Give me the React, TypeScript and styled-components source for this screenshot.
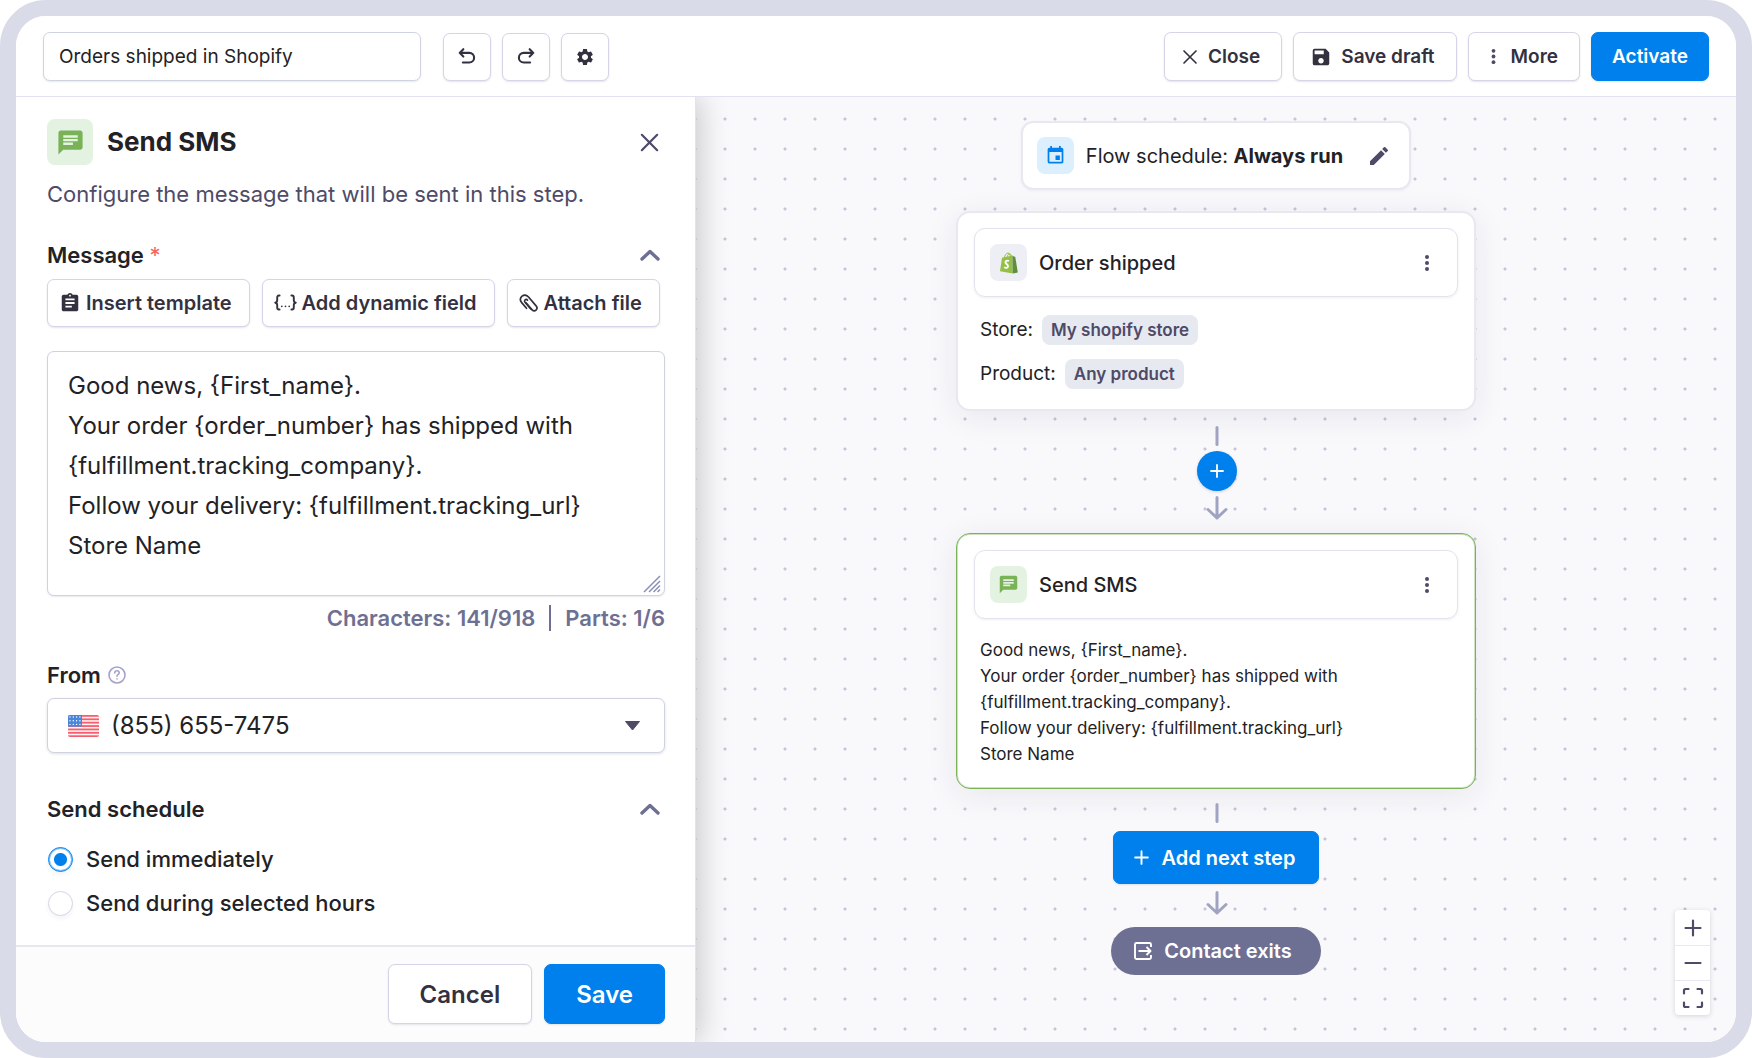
import React, { useState } from "react";
import styled, { createGlobalStyle, css } from "styled-components";
import { MdAssignment, MdChat, MdEdit, MdEvent, MdSave, MdSettings } from "react-icons/md";

const color = {
  frame: "#d9dbe8",
  line: "#e3e2f0",
  control: "#d5d4e8",
  field: "#ced3df",
  text: "#222226",
  dark: "#33313f",
  muted: "#6e7093",
  icon: "#4e4a67",
  blue: "#0080ec",
  green: "#79b257",
  connector: "#a0a4c2",
};

const GlobalStyle = createGlobalStyle`
  *, *::before, *::after { box-sizing: border-box; }
  body { margin: 0; background: #ffffff; }
  body, button, input, textarea, select {
    font-family: Inter, "Liberation Sans", sans-serif;
    color: ${color.text};
  }
  h1, h2, h3, p { margin: 0; }
`;

const Frame = styled.div`
  display: flex;
  flex-direction: column;
  min-height: 100vh;
  border: 16px solid ${color.frame};
  border-radius: 46px;
  overflow: hidden;
  background: #ffffff;
`;

const Toolbar = styled.header`
  position: relative;
  z-index: 2;
  display: flex;
  align-items: center;
  justify-content: space-between;
  padding: 16px 27px 15px;
  border-bottom: 1px solid ${color.line};
  background: #ffffff;
`;

const ToolbarGroup = styled.div`
  display: flex;
  align-items: center;
  gap: 11px;
`;

const FlowName = styled.input`
  width: 378px;
  height: 49px;
  margin-right: 11px;
  padding: 0 15px;
  border: 1px solid ${color.field};
  border-radius: 7px;
  box-shadow: 0 1px 2px rgba(40, 40, 80, 0.1);
  font-size: 19px;
  outline: none;
`;

type ButtonSize = "icon" | "bar" | "chip" | "large" | "step";

const buttonSizes = {
  icon: css`
    width: 48px;
    height: 48px;
  `,
  bar: css<{ $primary?: boolean }>`
    height: 49px;
    padding: ${(p) => (p.$primary ? "0 20px" : "0 21px 0 16px")};
    gap: 9px;
    font-size: 19px;
  `,
  chip: css`
    height: 48px;
    padding: 0 17px 0 11px;
    gap: 5px;
    font-size: 20px;
  `,
  large: css`
    height: 60px;
    padding: 0 31px;
    font-size: 24px;
  `,
  step: css`
    height: 53px;
    padding: 0 23px 0 19px;
    gap: 12px;
    font-size: 20px;
  `,
};

const Button = styled.button<{ $size: ButtonSize; $primary?: boolean }>`
  display: inline-flex;
  align-items: center;
  justify-content: center;
  border: 1px solid ${(p) => (p.$primary ? color.blue : color.control)};
  border-radius: 7px;
  background: ${(p) => (p.$primary ? color.blue : "#ffffff")};
  color: ${(p) => (p.$primary ? "#ffffff" : color.dark)};
  box-shadow: 0 1px 2px rgba(40, 40, 80, 0.12);
  font-weight: 600;
  white-space: nowrap;
  cursor: pointer;
  ${(p) => buttonSizes[p.$size]}
`;

const PlainButton = styled.button`
  display: inline-flex;
  align-items: center;
  justify-content: center;
  padding: 0;
  border: 0;
  background: none;
  color: ${color.icon};
  cursor: pointer;
`;

const Body = styled.div`
  display: grid;
  grid-template-columns: minmax(560px, 680px) 1fr;
  flex: 1;
`;

const Sidebar = styled.aside`
  display: flex;
  flex-direction: column;
  z-index: 1;
  border-right: 1px solid ${color.line};
  background: #ffffff;
  box-shadow: 4px 0 28px rgba(0, 0, 0, 0.2);
`;

const SidebarContent = styled.div`
  display: flex;
  flex: 1;
  flex-direction: column;
  padding: 22px 30px 27px 31px;
`;

const TitleRow = styled.div`
  display: flex;
  align-items: center;
  gap: 14px;
  padding-right: 4px;
`;

const PanelTitle = styled.h1`
  flex: 1;
  font-size: 26px;
  line-height: 32px;
  font-weight: 700;
`;

const IconTile = styled.span<{ $size: number; $background: string; $color: string }>`
  display: inline-flex;
  align-items: center;
  justify-content: center;
  flex: none;
  width: ${(p) => p.$size}px;
  height: ${(p) => p.$size}px;
  border-radius: 8px;
  background: ${(p) => p.$background};
  color: ${(p) => p.$color};
`;

const Description = styled.p`
  margin-top: 13px;
  color: ${color.icon};
  font-size: 22px;
  line-height: 32px;
`;

const SectionHead = styled.div<{ $top: number }>`
  display: flex;
  align-items: center;
  justify-content: space-between;
  margin-top: ${(p) => p.$top}px;
  padding-right: 5px;
`;

const labelText = css`
  font-size: 22px;
  line-height: 28px;
  font-weight: 600;
`;

const Label = styled.label`
  ${labelText}
`;

const SectionTitle = styled.h2`
  ${labelText}
`;

const Required = styled.span`
  color: #f2665f;
  font-weight: 400;
`;

const ChipRow = styled.div`
  display: flex;
  gap: 12px;
  margin-top: 10px;
`;

const MessageField = styled.div`
  position: relative;
  margin-top: 24px;
`;

const MessageInput = styled.textarea`
  display: block;
  width: 100%;
  height: 245px;
  padding: 14px 20px;
  border: 1px solid ${color.field};
  border-radius: 7px;
  box-shadow: 0 1px 2px rgba(40, 40, 80, 0.1);
  font-size: 24px;
  line-height: 40px;
  outline: none;
  resize: none;
`;

const ResizeGrip = styled.svg`
  position: absolute;
  right: 4px;
  bottom: 3px;
  pointer-events: none;
`;

const Counter = styled.div`
  display: flex;
  align-items: center;
  justify-content: flex-end;
  gap: 14px;
  margin-top: 8px;
  color: ${color.muted};
  font-size: 22px;
  line-height: 28px;
  font-weight: 600;
`;

const Divider = styled.span`
  width: 2px;
  height: 26px;
  background: ${color.muted};
`;

const FromHead = styled.div`
  display: flex;
  align-items: center;
  gap: 7px;
  margin-top: 29px;
`;

const SelectBox = styled.div`
  display: grid;
  position: relative;
  align-items: center;
  margin-top: 9px;

  & > svg {
    position: absolute;
    pointer-events: none;
  }
  & > svg:first-child {
    left: 21px;
  }
  & > svg:last-child {
    right: 24px;
  }
`;

const NumberSelect = styled.select`
  width: 100%;
  height: 55px;
  padding: 0 60px 0 63px;
  border: 1px solid ${color.field};
  border-radius: 7px;
  background: #ffffff;
  box-shadow: 0 1px 3px rgba(40, 40, 80, 0.14);
  font-size: 24px;
  appearance: none;
  outline: none;
`;

const RadioList = styled.div`
  display: grid;
  gap: 16px;
  margin-top: 22px;
`;

const RadioLabel = styled.label`
  display: flex;
  align-items: center;
  gap: 13px;
  font-size: 22px;
  line-height: 28px;
  font-weight: 500;
  cursor: pointer;
`;

const Radio = styled.input`
  width: 25px;
  height: 25px;
  margin: 0 0 0 1px;
  border: 1px solid ${color.control};
  border-radius: 50%;
  background: #ffffff;
  box-shadow: 0 3px 4px rgba(40, 40, 80, 0.05);
  appearance: none;

  &:checked {
    border-color: ${color.blue};
    box-shadow: inset 0 0 0 1px ${color.blue}80, 0 3px 4px rgba(40, 40, 80, 0.05);
    background: radial-gradient(circle, ${color.blue} 6px, #ffffff 7px);
  }
`;

const SidebarFooter = styled.footer`
  display: flex;
  justify-content: flex-end;
  gap: 12px;
  padding: 17px 30px 18px;
  border-top: 2px solid #e8e7f1;
  background: #fcfcfd;
`;

const Canvas = styled.main`
  position: relative;
  display: flex;
  flex-direction: column;
  align-items: center;
  padding: 24px 20px;
  background: #f9f9fc;
`;

const Backdrop = styled.div`
  position: absolute;
  inset: 0;
  display: flex;
  flex-direction: column;
  gap: 10px;
`;

const Dots = styled.div<{ $tail?: boolean }>`
  flex: ${(p) => (p.$tail ? "0 0 178px" : "1")};
  background-image: radial-gradient(circle, #c6c4d9 1px, transparent 2px);
  background-size: 30px 30px;
  background-position: 14px ${(p) => (p.$tail ? 0 : 7)}px;
`;

const cardSurface = css`
  position: relative;
  border: 2px solid #e9e8f1;
  border-radius: 12px;
  background: #ffffff;
`;

const ScheduleCard = styled.section`
  ${cardSurface}
  display: flex;
  align-items: center;
  gap: 12px;
  height: 69px;
  padding: 0 18px 0 14px;
  box-shadow: 0 1px 3px rgba(40, 40, 80, 0.05);
`;

const ScheduleText = styled.p`
  margin-right: 12px;
  font-size: 20px;
  line-height: 28px;
`;

const StepCard = styled.section<{ $selected?: boolean }>`
  ${cardSurface}
  width: 520px;
  margin-top: ${(p) => (p.$selected ? 13 : 21)}px;
  padding: 15px 16px 20px;
  border-color: ${(p) => (p.$selected ? color.green : "#e9e8f1")};
  border-radius: 14px;
  box-shadow: 0 6px 32px rgba(40, 40, 60, 0.08);
  ${(p) =>
    p.$selected &&
    css`
      border-width: 1px;
      padding: 16px 17px 21px;
      box-shadow: inset 0 0 0 1px ${color.green}60, 0 6px 32px rgba(40, 40, 60, 0.08);
    `}
`;

const StepHeader = styled.header`
  display: flex;
  align-items: center;
  gap: 12px;
  height: 69px;
  padding: 0 21px 0 15px;
  border: 1px solid #e3e2ee;
  border-radius: 11px;
  box-shadow: 0 1px 3px rgba(40, 40, 80, 0.08);
`;

const StepTitle = styled.h3`
  flex: 1;
  font-size: 20px;
  line-height: 28px;
  font-weight: 500;
`;

const Property = styled.div<{ $first?: boolean }>`
  display: flex;
  align-items: center;
  gap: 9px;
  margin: ${(p) => (p.$first ? 18 : 14)}px 0 0 6px;
  font-size: 19px;
  line-height: 30px;
`;

const Tag = styled.span`
  padding: 0 9px;
  border-radius: 8px;
  background: #e7e9f1;
  color: ${color.icon};
  font-size: 17px;
  font-weight: 600;
`;

const Preview = styled.p`
  margin: 18px 0 0 6px;
  font-size: 17px;
  line-height: 26px;
  white-space: pre-line;
`;

const connectorAxis = css`
  position: relative;
  margin-left: 2px;
`;

const Connector = styled.svg<{ $top: number }>`
  ${connectorAxis}
  display: block;
  flex: none;
  margin-top: ${(p) => p.$top}px;
`;

const AddCircle = styled.button`
  ${connectorAxis}
  display: flex;
  align-items: center;
  justify-content: center;
  width: 40px;
  height: 40px;
  margin-top: 5px;
  padding: 0;
  border: 0;
  border-radius: 50%;
  background: ${color.blue};
  color: #ffffff;
  box-shadow: 0 1px 3px rgba(40, 40, 80, 0.2);
  cursor: pointer;
`;

const AddStep = styled(Button)`
  position: relative;
  margin-top: 8px;
`;

const ExitPill = styled.div`
  position: relative;
  display: flex;
  align-items: center;
  gap: 11px;
  height: 48px;
  margin-top: 12px;
  padding: 0 29px 0 22px;
  border-radius: 24px;
  background: ${color.muted};
  color: #ffffff;
  font-size: 20px;
  font-weight: 600;
`;

const ZoomControls = styled.div`
  position: absolute;
  right: 26px;
  bottom: 27px;
  display: grid;
  width: 35px;
  border-radius: 4px;
  background: #ffffff;
  box-shadow: 0 1px 5px rgba(40, 40, 60, 0.18);

  & > button {
    height: 35px;
  }
  & > button + button {
    border-top: 1px solid #e9e8f1;
  }
`;

const Stroke = ({ size = 24, width = 2, d }: { size?: number; width?: number; d: string }) => (
  <svg width={size} height={size} viewBox="0 0 24 24" fill="none" stroke="currentColor" strokeWidth={width} strokeLinecap="round" strokeLinejoin="round" aria-hidden="true">
    <path d={d} />
  </svg>
);

const UndoIcon = () => <Stroke size={22} width={2.3} d="M8 3.500 4 7.500l4 4M4.300 7.500H14.500a5 5 0 0 1 0 10.500H7.500" />;
const RedoIcon = () => <Stroke size={22} width={2.3} d="M16 3.500l4 4-4 4M19.700 7.500H9.500a5 5 0 0 0 0 10.500h7" />;

const CrossIcon = ({ size, width }: { size: number; width: number }) => <Stroke size={size} width={width} d="M4 4l16 16M20 4 4 20" />;

const ChevronUp = () => (
  <svg width="20" height="14" viewBox="0 0 20 14" fill="none" stroke={color.muted} strokeWidth="3.400" strokeLinecap="round" strokeLinejoin="round" aria-hidden="true">
    <path d="M2 11 10 3.500l8 7.500" />
  </svg>
);

const Kebab = ({ size }: { size: number }) => (
  <svg width={size} height={size} viewBox="0 0 18 18" fill={color.icon} aria-hidden="true">
    <circle cx="9" cy="3" r="2" />
    <circle cx="9" cy="9" r="2" />
    <circle cx="9" cy="15" r="2" />
  </svg>
);

const BracesIcon = () => (
  <svg width="23" height="18" viewBox="0 0 23 18" fill="none" stroke="currentColor" strokeWidth="1.9" strokeLinecap="round" strokeLinejoin="round" aria-hidden="true">
    <path d="M5.600 1.500H5C3.700 1.500 3.200 2.200 3.200 3.500v2.800c0 1.400-.7 2.200-2 2.400 1.300.2 2 1 2 2.400v2.400c0 1.300.5 2 1.800 2h.6" />
    <path d="M17.400 1.500h.6c1.300 0 1.800.7 1.800 2v2.800c0 1.400.7 2.200 2 2.400-1.300.2-2 1-2 2.400v2.400c0 1.300-.5 2-1.800 2h-.6" />
    <path d="M7.800 12.300h.01M11.500 12.300h.01M15.200 12.300h.01" strokeWidth="1.700" />
  </svg>
);

const ClipIcon = () => (
  <svg width="20" height="20" viewBox="0 0 20 20" fill="none" stroke="currentColor" strokeWidth="1.7" strokeLinecap="round" strokeLinejoin="round" aria-hidden="true">
    <path d="M7.500 15.300 2.700 9.600C.9 7.400 1.200 4.800 3.100 3.200s4.600-1.300 6.400.8l7.600 8.900c1.200 1.400 1.100 3.100-.1 4.200s-2.900.9-4.100-.5L7 9.700" />
    <path d="M11.500 15.800 6 9.300C5.300 8.400 5.400 7.400 6.100 6.800s1.700-.5 2.400.4" />
  </svg>
);

const HelpIcon = () => (
  <svg width="18" height="18" viewBox="0 0 18 18" fill="none" stroke="#a3a3c8" strokeWidth="1.600" strokeLinecap="round" strokeLinejoin="round" aria-hidden="true">
    <circle cx="9" cy="9" r="8" />
    <path d="M6.800 7c0-1.300 1-2.200 2.200-2.200s2.200.9 2.200 2.100c0 1.500-2.200 1.700-2.200 3.300M9 12.900h.01" />
  </svg>
);

const FlagIcon = () => (
  <svg width="31" height="22" viewBox="0 0 31 22" aria-hidden="true">
    <clipPath id="flag-shape">
      <rect width="31" height="22" rx="2" />
    </clipPath>
    <g clipPath="url(#flag-shape)">
      <rect width="31" height="22" fill="#fdf3f4" />
      {[0, 1, 2, 3, 4, 5, 6].map((row) => (
        <rect key={row} y={row * 3.385} width="31" height="1.800" fill="#f4606f" />
      ))}
      <rect width="14" height="11.600" fill="#4a86dc" />
      {[0, 1, 2].map((row) =>
        [0, 1, 2, 3].map((col) => <circle key={`${row}-${col}`} cx={2 + col * 3.300} cy={2 + row * 3.700} r="0.700" fill="#ffffff" />)
      )}
    </g>
  </svg>
);

const ShopifyIcon = () => (
  <svg width="18" height="22" viewBox="0 0 18 22" aria-hidden="true">
    <path d="M2 5.800 12.400 3.600 12.800 21.500 0 19.300Z" fill="#95bf47" />
    <path d="M12.400 3.800 15.300 5 17.800 20.400 12.800 21.500Z" fill="#5e8e3e" />
    <path d="M4.300 6C4.800 3.200 6.300 1 8 1c1.500 0 2.200 1.600 2.300 3.700M7 5.200C7.500 3 8.800 1.600 10 1.900c1 .3 1.300 1.400 1.500 2.300" fill="none" stroke="#95bf47" strokeWidth="1" />
    <path d="M9 9c-2-.9-3.700 0-3.500 1.500.2 1.400 2.600 1.700 2.500 3.700-.1 1.600-1.900 2.300-3.800 1.100" fill="none" stroke="#ffffff" strokeWidth="1.900" />
  </svg>
);

const ExitIcon = () => (
  <svg width="20" height="20" viewBox="0 0 20 20" fill="none" stroke="currentColor" strokeWidth="1.900" strokeLinejoin="round" aria-hidden="true">
    <path d="M18 6V3.500A1.500 1.500 0 0 0 16.500 2h-13A1.500 1.500 0 0 0 2 3.500v13A1.500 1.500 0 0 0 3.500 18h13a1.500 1.500 0 0 0 1.500-1.500V14" />
    <path d="M5.500 10H17M13.500 6l4 4-4 4" />
  </svg>
);

const PlusIcon = ({ size, width }: { size: number; width: number }) => <Stroke size={size} width={width} d="M12 3v18M3 12h18" />;
const MinusIcon = () => <Stroke size={20} width={2.600} d="M3 12h18" />;

const FullscreenIcon = () => (
  <svg width="22" height="22" viewBox="0 0 22 22" fill="none" stroke="currentColor" strokeWidth="2.200" strokeLinecap="round" strokeLinejoin="round" aria-hidden="true">
    <path d="M2 6.500V3.500A1.500 1.500 0 0 1 3.500 2h3M15.500 2h3A1.500 1.500 0 0 1 20 3.500v3M20 15.500v3a1.500 1.500 0 0 1-1.500 1.500h-3M6.500 20h-3A1.500 1.500 0 0 1 2 18.500v-3" />
  </svg>
);

const Line = ({ top }: { top: number }) => (
  <Connector $top={top} width="22" height="20" viewBox="0 0 22 20" stroke={color.connector} strokeWidth="3" strokeLinecap="round" aria-hidden="true">
    <path d="M11 1.500v17" />
  </Connector>
);

const Arrow = ({ top }: { top: number }) => (
  <Connector $top={top} width="22" height="24" viewBox="0 0 22 24" fill="none" stroke={color.connector} strokeWidth="3" strokeLinecap="round" strokeLinejoin="round" aria-hidden="true">
    <path d="M11 1.500V22M2 13.500l9 8.500 9-8.500" />
  </Connector>
);

const messageText = [
  "Good news, {First_name}.",
  "Your order {order_number} has shipped with",
  "{fulfillment.tracking_company}.",
  "Follow your delivery: {fulfillment.tracking_url}",
  "Store Name",
].join("\n");

const scheduleOptions = [
  { value: "now", label: "Send immediately" },
  { value: "hours", label: "Send during selected hours" },
];

export default function App() {
  const [flowName, setFlowName] = useState("Orders shipped in Shopify");
  const [message, setMessage] = useState(messageText);
  const [schedule, setSchedule] = useState("now");

  return (
    <>
      <GlobalStyle />
      <Frame>
        <Toolbar>
          <ToolbarGroup>
            <FlowName aria-label="Flow name" value={flowName} onChange={(e) => setFlowName(e.target.value)} />
            <Button $size="icon" aria-label="Undo"><UndoIcon /></Button>
            <Button $size="icon" aria-label="Redo"><RedoIcon /></Button>
            <Button $size="icon" aria-label="Settings"><MdSettings size={20} /></Button>
          </ToolbarGroup>
          <ToolbarGroup>
            <Button $size="bar"><CrossIcon size={18} width={2.200} />Close</Button>
            <Button $size="bar"><MdSave size={22} />Save draft</Button>
            <Button $size="bar"><Kebab size={17} />More</Button>
            <Button $size="bar" $primary>Activate</Button>
          </ToolbarGroup>
        </Toolbar>

        <Body>
          <Sidebar>
            <SidebarContent>
              <TitleRow>
                <IconTile $size={46} $background="#e4f3e1" $color={color.green}><MdChat size={29} /></IconTile>
                <PanelTitle>Send SMS</PanelTitle>
                <PlainButton aria-label="Close panel"><CrossIcon size={23} width={2.300} /></PlainButton>
              </TitleRow>
              <Description>Configure the message that will be sent in this step.</Description>

              <SectionHead $top={31}>
                <Label htmlFor="message">Message <Required>*</Required></Label>
                <PlainButton aria-label="Collapse message"><ChevronUp /></PlainButton>
              </SectionHead>
              <ChipRow>
                <Button $size="chip"><MdAssignment size={22} />Insert template</Button>
                <Button $size="chip"><BracesIcon />Add dynamic field</Button>
                <Button $size="chip"><ClipIcon />Attach file</Button>
              </ChipRow>
              <MessageField>
                <MessageInput id="message" value={message} onChange={(e) => setMessage(e.target.value)} />
                <ResizeGrip width="18" height="18" viewBox="0 0 18 18" stroke="#8b8fb4" strokeWidth="1.500" aria-hidden="true">
                  <path d="M1 17 17 1M6 17 17 6M10.500 17 17 10.500M14.500 17l2.500-2.500" />
                </ResizeGrip>
              </MessageField>
              <Counter>
                <span>Characters: 141/918</span>
                <Divider />
                <span>Parts: 1/6</span>
              </Counter>

              <FromHead>
                <Label htmlFor="from">From</Label>
                <HelpIcon />
              </FromHead>
              <SelectBox>
                <FlagIcon />
                <NumberSelect id="from">
                  <option>(855) 655-7475</option>
                </NumberSelect>
                <svg width="17" height="10" viewBox="0 0 17 10" aria-hidden="true">
                  <path d="M1.500.5h14L8.500 9Z" fill={color.icon} stroke={color.icon} strokeLinejoin="round" />
                </svg>
              </SelectBox>

              <SectionHead $top={42}>
                <SectionTitle>Send schedule</SectionTitle>
                <PlainButton aria-label="Collapse send schedule"><ChevronUp /></PlainButton>
              </SectionHead>
              <RadioList>
                {scheduleOptions.map((option) => (
                  <RadioLabel key={option.value}>
                    <Radio type="radio" name="schedule" checked={schedule === option.value} onChange={() => setSchedule(option.value)} />
                    {option.label}
                  </RadioLabel>
                ))}
              </RadioList>
            </SidebarContent>
            <SidebarFooter>
              <Button $size="large">Cancel</Button>
              <Button $size="large" $primary>Save</Button>
            </SidebarFooter>
          </Sidebar>

          <Canvas>
            <Backdrop aria-hidden="true">
              <Dots />
              <Dots $tail />
            </Backdrop>

            <ScheduleCard>
              <IconTile $size={37} $background="#dceffe" $color={color.blue}><MdEvent size={21} /></IconTile>
              <ScheduleText>Flow schedule: <b>Always run</b></ScheduleText>
              <PlainButton aria-label="Edit flow schedule"><MdEdit size={24} /></PlainButton>
            </ScheduleCard>

            <StepCard>
              <StepHeader>
                <IconTile $size={37} $background="#eeeff5" $color={color.green}><ShopifyIcon /></IconTile>
                <StepTitle>Order shipped</StepTitle>
                <PlainButton aria-label="Order shipped options"><Kebab size={18} /></PlainButton>
              </StepHeader>
              <Property $first>Store: <Tag>My shopify store</Tag></Property>
              <Property>Product: <Tag>Any product</Tag></Property>
            </StepCard>

            <Line top={15} />
            <AddCircle aria-label="Add step"><PlusIcon size={16} width={2.700} /></AddCircle>
            <Arrow top={5} />

            <StepCard $selected>
              <StepHeader>
                <IconTile $size={37} $background="#e4f3e1" $color={color.green}><MdChat size={21} /></IconTile>
                <StepTitle>Send SMS</StepTitle>
                <PlainButton aria-label="Send SMS options"><Kebab size={18} /></PlainButton>
              </StepHeader>
              <Preview>{message}</Preview>
            </StepCard>

            <Line top={14} />
            <AddStep $size="step" $primary><PlusIcon size={17} width={2.700} />Add next step</AddStep>
            <Arrow top={7} />
            <ExitPill><ExitIcon />Contact exits</ExitPill>

            <ZoomControls>
              <PlainButton aria-label="Zoom in"><PlusIcon size={20} width={2.600} /></PlainButton>
              <PlainButton aria-label="Zoom out"><MinusIcon /></PlainButton>
              <PlainButton aria-label="Fit to screen"><FullscreenIcon /></PlainButton>
            </ZoomControls>
          </Canvas>
        </Body>
      </Frame>
    </>
  );
}
